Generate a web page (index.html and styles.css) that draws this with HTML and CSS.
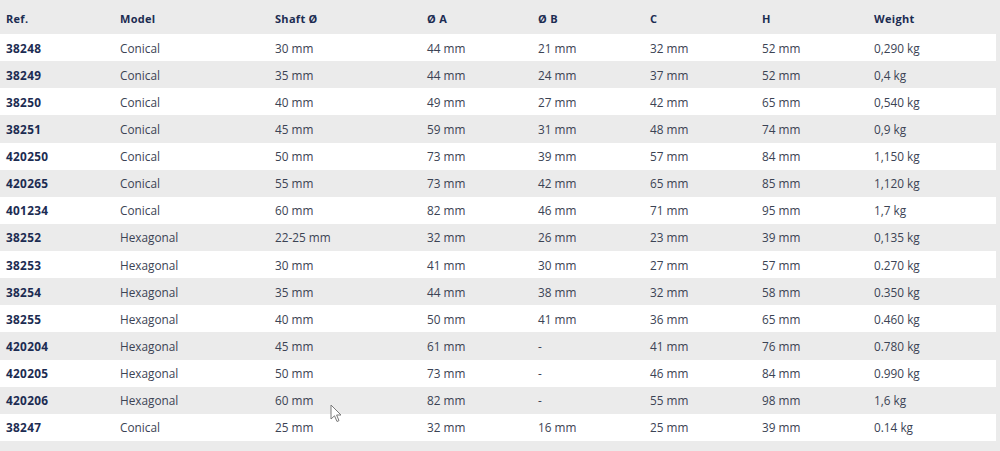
FILE: index.html
```html
<!DOCTYPE html>
<html>
<head>
<meta charset="utf-8">
<link rel="stylesheet" href="styles.css">
</head>
<body>
<div class="page">
<table class="specs">
<colgroup>
<col class="c-ref"><col class="c-model"><col class="c-shaft"><col class="c-a"><col class="c-b"><col class="c-c"><col class="c-h"><col class="c-w">
</colgroup>
<thead>
<tr><th>Ref.</th><th>Model</th><th>Shaft Ø</th><th>Ø A</th><th>Ø B</th><th>C</th><th>H</th><th>Weight</th></tr>
</thead>
<tbody>
<tr><td class="ref">38248</td><td>Conical</td><td>30 mm</td><td>44 mm</td><td>21 mm</td><td>32 mm</td><td>52 mm</td><td>0,290 kg</td></tr>
<tr><td class="ref">38249</td><td>Conical</td><td>35 mm</td><td>44 mm</td><td>24 mm</td><td>37 mm</td><td>52 mm</td><td>0,4 kg</td></tr>
<tr><td class="ref">38250</td><td>Conical</td><td>40 mm</td><td>49 mm</td><td>27 mm</td><td>42 mm</td><td>65 mm</td><td>0,540 kg</td></tr>
<tr><td class="ref">38251</td><td>Conical</td><td>45 mm</td><td>59 mm</td><td>31 mm</td><td>48 mm</td><td>74 mm</td><td>0,9 kg</td></tr>
<tr><td class="ref">420250</td><td>Conical</td><td>50 mm</td><td>73 mm</td><td>39 mm</td><td>57 mm</td><td>84 mm</td><td>1,150 kg</td></tr>
<tr><td class="ref">420265</td><td>Conical</td><td>55 mm</td><td>73 mm</td><td>42 mm</td><td>65 mm</td><td>85 mm</td><td>1,120 kg</td></tr>
<tr><td class="ref">401234</td><td>Conical</td><td>60 mm</td><td>82 mm</td><td>46 mm</td><td>71 mm</td><td>95 mm</td><td>1,7 kg</td></tr>
<tr><td class="ref">38252</td><td>Hexagonal</td><td>22-25 mm</td><td>32 mm</td><td>26 mm</td><td>23 mm</td><td>39 mm</td><td>0,135 kg</td></tr>
<tr><td class="ref">38253</td><td>Hexagonal</td><td>30 mm</td><td>41 mm</td><td>30 mm</td><td>27 mm</td><td>57 mm</td><td>0.270 kg</td></tr>
<tr><td class="ref">38254</td><td>Hexagonal</td><td>35 mm</td><td>44 mm</td><td>38 mm</td><td>32 mm</td><td>58 mm</td><td>0.350 kg</td></tr>
<tr><td class="ref">38255</td><td>Hexagonal</td><td>40 mm</td><td>50 mm</td><td>41 mm</td><td>36 mm</td><td>65 mm</td><td>0.460 kg</td></tr>
<tr><td class="ref">420204</td><td>Hexagonal</td><td>45 mm</td><td>61 mm</td><td>-</td><td>41 mm</td><td>76 mm</td><td>0.780 kg</td></tr>
<tr><td class="ref">420205</td><td>Hexagonal</td><td>50 mm</td><td>73 mm</td><td>-</td><td>46 mm</td><td>84 mm</td><td>0.990 kg</td></tr>
<tr><td class="ref">420206</td><td>Hexagonal</td><td>60 mm</td><td>82 mm</td><td>-</td><td>55 mm</td><td>98 mm</td><td>1,6 kg</td></tr>
<tr><td class="ref">38247</td><td>Conical</td><td>25 mm</td><td>32 mm</td><td>16 mm</td><td>25 mm</td><td>39 mm</td><td>0.14 kg</td></tr>
</tbody>
</table>
<svg class="cursor" width="13" height="20" viewBox="0 0 13 20"><path d="M1 1 L1 15 L4.5 11.8 L7 17.5 L9 16.6 L6.6 11 L11 11 Z" fill="#fff" stroke="#7a7a7a" stroke-width="1" stroke-linejoin="round"/></svg>
</div>
</body>
</html>
```
FILE: styles.css
```css
html, body {
  margin: 0;
  padding: 0;
  background: #ebebeb;
}
.page {
  position: relative;
  width: 1000px;
  height: 451px;
  font-family: "Open Sans", "Noto Sans", sans-serif;
}
.specs {
  width: 996px;
  border-collapse: collapse;
  table-layout: fixed;
}
.c-ref { width: 114px; }
.c-model { width: 155px; }
.c-shaft { width: 152px; }
.c-a { width: 111px; }
.c-b { width: 112px; }
.c-c { width: 112px; }
.c-h { width: 112px; }
.c-w { width: 128px; }
.specs th {
  height: 34px;
  padding: 3px 0 0 6px;
  text-align: left;
  font-size: 11px;
  font-weight: 700;
  letter-spacing: 0.3px;
  color: #1c2c52;
  vertical-align: middle;
  box-sizing: border-box;
}
.specs td {
  height: 27.14px;
  padding: 0 0 0 6px;
  font-size: 11.8px;
  color: #3b4354;
  vertical-align: middle;
  box-sizing: border-box;
  white-space: nowrap;
}
.specs td.ref {
  font-weight: 700;
  letter-spacing: 0.3px;
  color: #1c2c52;
}
.specs tbody tr:nth-child(odd) {
  background: #ffffff;
}
.specs tbody tr:nth-child(even) {
  background: #ebebeb;
}
.cursor {
  position: absolute;
  left: 330px;
  top: 404px;
}
```
